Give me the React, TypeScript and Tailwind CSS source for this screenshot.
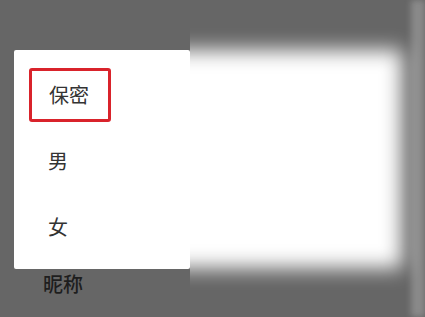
export default function App() {
  return (
    <div
      className="relative w-[425px] h-[317px] overflow-hidden bg-[#666666] flex flex-col justify-end"
      style={{ fontFamily: '"Noto Sans CJK SC", "Noto Sans", sans-serif' }}
    >
      {/* underlying form row, dimmed behind the overlay */}
      <div className="px-[43px] pb-[23px] text-[20px] leading-none font-medium text-[#1e1e1e]">昵称</div>

      {/* right edge strip */}
      <div className="absolute right-0 top-0 h-full w-[14px] bg-[#8a8a8a] blur-[3px]" />
      {/* blurred background dialog, clipped at the menu's right edge */}
      <div className="absolute left-[190px] top-0 w-[235px] h-full overflow-hidden">
        <div className="absolute left-[-40px] top-[50px] w-[252px] h-[218px] bg-white blur-[10px]" />
      </div>

      {/* popup menu */}
      <div className="absolute left-[14px] top-[50px] w-[176px] h-[219px] bg-white rounded-[2px] pt-[18px]">
        <ul className="flex flex-col text-[20px] leading-none text-[#333]">
          <li className="ml-[15px] w-[82px] h-[54px] border-[3px] border-[#d9232b] rounded-[3px] flex items-center pl-[17px]">
            保密
          </li>
          <li className="h-[66px] flex items-center pl-[34px] mt-[6px]">男</li>
          <li className="h-[66px] flex items-center pl-[34px]">女</li>
        </ul>
      </div>
    </div>
  )
}
